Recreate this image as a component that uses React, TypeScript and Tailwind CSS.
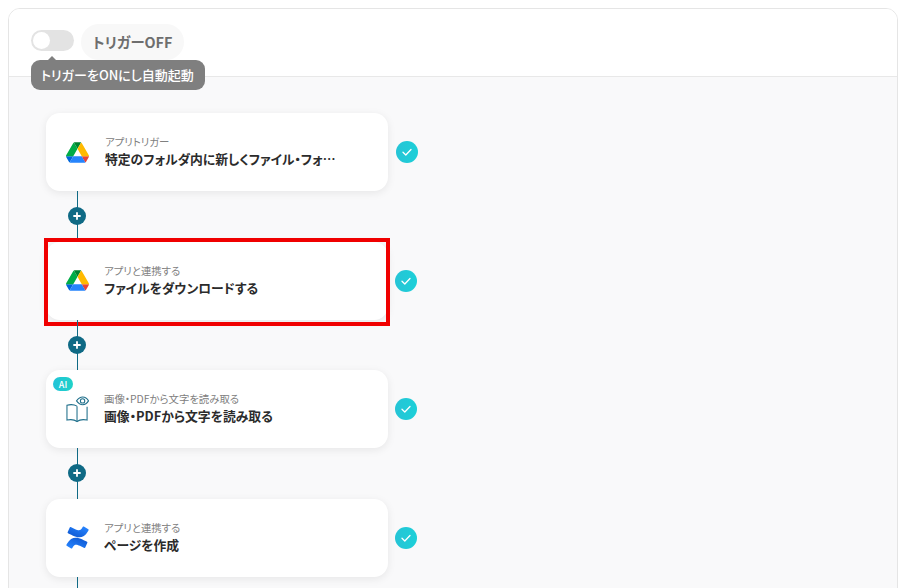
import React from "react";

const DriveIcon = () => (
  <svg viewBox="0 0 87.3 78" className="w-[23px] h-[21px]">
    <path d="m6.6 66.85 3.85 6.65c.8 1.4 1.95 2.5 3.3 3.3l13.75-23.8h-27.5c0 1.55.4 3.1 1.2 4.5z" fill="#0066da" />
    <path d="m43.65 25-13.75-23.8c-1.35.8-2.5 1.9-3.3 3.3l-25.4 44a9.06 9.06 0 0 0 -1.2 4.5h27.5z" fill="#00ac47" />
    <path d="m73.55 76.8c1.35-.8 2.5-1.9 3.3-3.3l1.6-2.75 7.65-13.25c.8-1.4 1.2-2.95 1.2-4.5h-27.502l5.852 11.5z" fill="#ea4335" />
    <path d="m43.65 25 13.75-23.8c-1.35-.8-2.9-1.2-4.5-1.2h-18.5c-1.6 0-3.15.45-4.5 1.2z" fill="#00832d" />
    <path d="m59.8 53h-32.3l-13.75 23.8c1.35.8 2.9 1.2 4.5 1.2h50.8c1.6 0 3.15-.45 4.5-1.2z" fill="#2684fc" />
    <path d="m73.4 26.5-12.7-22c-.8-1.4-1.95-2.5-3.3-3.3l-13.75 23.8 16.15 28h27.45c0-1.55-.4-3.1-1.2-4.5z" fill="#ffba00" />
  </svg>
);

const BookIcon = () => (
  <svg viewBox="0 0 24 28" className="w-[23px] h-[27px] text-[#1f6f8b]" fill="none" stroke="currentColor" strokeWidth="1.100">
    <path d="M11.500 10.500C9 9 5 8.500 1 9.500v15.500c4-.8 7.800-.5 10.500 1.500 2.700-2 6.500-2.300 10.500-1.500V11" />
    <path d="M11.500 10.500V26.500" />
    <path d="M11 5C12.800 2.500 15 1 17.500 1S22 2.500 23.500 5C22 7.500 20 9 17.500 9S12.800 7.500 11 5Z" />
    <circle cx="17.300" cy="5" r="2.300" />
  </svg>
);

const ConfluenceIcon = () => (
  <svg viewBox="0 0 24 24" className="w-[23px] h-[23px]">
    <defs>
      <linearGradient id="cfA" x1="1" y1="0" x2="0.2" y2="1">
        <stop offset="0" stopColor="#0b52cc" />
        <stop offset="1" stopColor="#2684ff" />
      </linearGradient>
      <linearGradient id="cfB" x1="0" y1="1" x2="0.8" y2="0">
        <stop offset="0" stopColor="#0b52cc" />
        <stop offset="1" stopColor="#2684ff" />
      </linearGradient>
    </defs>
    <path d="M1.200 18.200c-.3.5-.5 1-.8 1.300-.2.400 0 .8.300 1l4.700 2.900c.4.200.8.100 1-.3.200-.3.500-.8.800-1.300 1.900-3.100 3.800-2.700 7.200-1.100l4.700 2.200c.4.200.8 0 1-.4l2.200-5.100c.2-.4 0-.8-.4-1-1-.5-3-1.400-4.700-2.300-6.400-3.100-11.900-2.900-16 4.100Z" fill="url(#cfA)" />
    <path d="M22.800 5.800c.3-.5.5-1 .8-1.300.2-.4 0-.8-.3-1L18.600.6c-.4-.2-.8-.1-1 .3-.2.3-.5.8-.8 1.300-1.900 3.100-3.800 2.700-7.200 1.100L4.900 1.100c-.4-.2-.8 0-1 .4L1.700 6.600c-.2.400 0 .8.400 1 1 .5 3 1.400 4.700 2.300 6.400 3.100 11.900 2.900 16-4.100Z" fill="url(#cfB)" />
  </svg>
);

const steps = [
  { label: "アプリトリガー", title: "特定のフォルダ内に新しくファイル・フォルダが作成されたら", icon: <DriveIcon /> },
  { label: "アプリと連携する", title: "ファイルをダウンロードする", icon: <DriveIcon />, selected: true },
  { label: "画像・PDFから文字を読み取る", title: "画像・PDFから文字を読み取る", icon: <BookIcon />, ai: true },
  { label: "アプリと連携する", title: "ページを作成", icon: <ConfluenceIcon /> },
];

const Connector = () => (
  <div className="h-[50.67px] w-[342px] flex flex-col items-center justify-center relative">
    <div className="w-px h-full bg-[#0f6a85] mr-[279px]" />
    <div className="absolute left-[22px] top-[16px] w-[18px] h-[18px] rounded-full bg-[#0f6a85] flex items-center justify-center">
      <svg viewBox="0 0 10 10" className="w-[10px] h-[10px]" stroke="white" strokeWidth="1.800" strokeLinecap="round">
        <path d="M5 2v6M2 5h6" />
      </svg>
    </div>
  </div>
);

const StepCard = ({ step, first }: { step: (typeof steps)[number]; first: boolean }) => (
  <div className="flex items-center">
    <div className="relative w-[342px] h-[78px] bg-white rounded-[14px] shadow-[0_2px_8px_rgba(0,0,0,0.08)] flex items-center pl-[20px]">
      {step.ai && (
        <span className="absolute left-[7px] top-[7px] w-[20px] h-[14px] rounded-full bg-gradient-to-r from-[#22c3d8] to-[#1fd2c8] text-white text-[9px] font-medium flex items-center justify-center leading-none">
          AI
        </span>
      )}
      <div className="w-[23px] flex justify-center shrink-0">{step.icon}</div>
      <div className={first ? "ml-[16px] min-w-0" : "ml-[15px] min-w-0"}>
        <div className="text-[10.4px] leading-[14px] text-[#808080]">{step.label}</div>
        <div className="text-[12.8px] leading-[20px] font-bold text-[#2b2b2b] w-[232px] truncate">{step.title}</div>
      </div>
      {step.selected && (
        <div className="absolute -left-[2px] -top-[4px] w-[346px] h-[88px] border-4 border-[#f00000]" />
      )}
    </div>
    <div className={first ? "ml-[8px] w-[22px] h-[22px] rounded-full bg-gradient-to-r from-[#25c4d6] to-[#1cd0d8] flex items-center justify-center" : "ml-[7px] w-[22px] h-[22px] rounded-full bg-gradient-to-r from-[#25c4d6] to-[#1cd0d8] flex items-center justify-center"}>
      <svg viewBox="0 0 12 12" className="w-[12px] h-[12px]" fill="none" stroke="white" strokeWidth="1.300" strokeLinecap="round" strokeLinejoin="round">
        <path d="M2 6.300 4.800 9 10 3.500" />
      </svg>
    </div>
  </div>
);

export default function App() {
  return (
    <div className="w-[906px] h-[588px] overflow-hidden bg-white pt-[8px] px-[8px] font-['Noto_Sans_CJK_JP','Noto_Sans',sans-serif] [font-feature-settings:'palt']">
      <div className="w-[890px] h-[600px] border border-[#e5e5e5] rounded-[12px] overflow-hidden">
        <div className="relative h-[68px] border-b border-[#e8e8e8] bg-white flex items-start pl-[22px] pt-[15px] gap-[7px]">
          <div className="mt-[6px] w-[43px] h-[21px] rounded-full bg-[#e3e3e3] flex items-center pl-[2px]">
            <div className="w-[17px] h-[17px] rounded-full bg-white" />
          </div>
          <div className="h-[36px] w-[103px] rounded-full bg-[#f8f8f8] flex items-center justify-center text-[14.4px] font-bold text-[#6e6e6e]">
            トリガーOFF
          </div>
          <div className="absolute left-[22px] top-[51px] h-[30px] w-[174px] rounded-[9px] bg-[#7f7f7f] flex items-center pl-[10px] text-[13px] font-medium text-white">
            <span className="absolute -top-[4px] left-[17px] w-0 h-0 border-x-[4px] border-x-transparent border-b-[4px] border-b-[#7f7f7f]" />
            トリガーをONにし自動起動
          </div>
        </div>
        <div className="h-[520px] bg-[#f9f9fa] pl-[37px] pt-[36px]">
          {steps.map((step, i) => (
            <div key={i}>
              <StepCard step={step} first={i === 0} />
              <Connector />
            </div>
          ))}
        </div>
      </div>
    </div>
  );
}
